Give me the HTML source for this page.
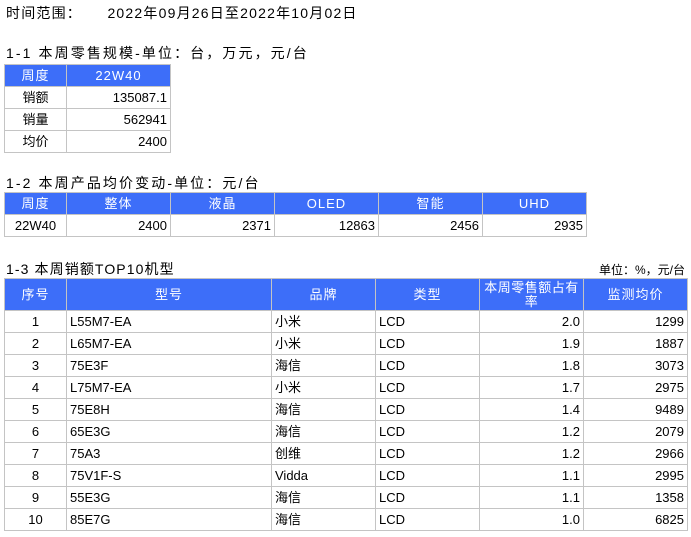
<!DOCTYPE html>
<html><head><meta charset="utf-8"><style>
*{margin:0;padding:0;box-sizing:border-box}
body{width:691px;height:537px;background:#fff;font-family:"Liberation Sans","Noto Sans CJK SC",sans-serif;font-size:13px;color:#000;position:relative;overflow:hidden}
.t{position:absolute;white-space:nowrap}
table{position:absolute;border-collapse:collapse;table-layout:fixed}
td{border:1px solid #c4c4c4;height:22px;padding:0 3px;line-height:14px;white-space:nowrap;overflow:hidden}
tr.h td{background:#3d6ef9;color:#fff;text-align:center;letter-spacing:1px}
.c{text-align:center}.r{text-align:right}.l{text-align:left}
</style></head><body>
<div class="t" style="left:6px;top:3px;font-size:14px;letter-spacing:1.2px">时间范围：&nbsp;&nbsp;&nbsp;&nbsp;&nbsp;2022年09月26日至2022年10月02日</div>
<div class="t" style="left:6px;top:43px;font-size:14px;letter-spacing:2.1px">1-1 本周零售规模-单位：台，万元，元/台</div>
<table style="left:4px;top:64px;width:166px">
<col style="width:62px"><col style="width:104px">
<tr class="h"><td>周度</td><td>22W40</td></tr>
<tr><td class="c">销额</td><td class="r">135087.1</td></tr>
<tr><td class="c">销量</td><td class="r">562941</td></tr>
<tr><td class="c">均价</td><td class="r">2400</td></tr>
</table>
<div class="t" style="left:6px;top:173px;font-size:14px;letter-spacing:2.1px">1-2 本周产品均价变动-单位：元/台</div>
<table style="left:4px;top:192px;width:582px">
<col style="width:62px"><col style="width:104px"><col style="width:104px"><col style="width:104px"><col style="width:104px"><col style="width:104px">
<tr class="h"><td>周度</td><td>整体</td><td>液晶</td><td>OLED</td><td>智能</td><td>UHD</td></tr>
<tr><td class="c">22W40</td><td class="r">2400</td><td class="r">2371</td><td class="r">12863</td><td class="r">2456</td><td class="r">2935</td></tr>
</table>
<div class="t" style="left:6px;top:259px;font-size:14px;letter-spacing:1.1px">1-3 本周销额TOP10机型</div>
<div class="t" style="right:6px;top:261px;font-size:12px">单位：%，元/台</div>
<table style="left:4px;top:278px;width:683px">
<col style="width:62px"><col style="width:205px"><col style="width:104px"><col style="width:104px"><col style="width:104px"><col style="width:104px">
<tr class="h"><td style="height:32px">序号</td><td>型号</td><td>品牌</td><td>类型</td><td style="line-height:14px;white-space:normal;padding:0 1px;letter-spacing:0.5px">本周零售额占有率</td><td>监测均价</td></tr>
<tr><td class="c">1</td><td>L55M7-EA</td><td>小米</td><td>LCD</td><td class="r">2.0</td><td class="r">1299</td></tr>
<tr><td class="c">2</td><td>L65M7-EA</td><td>小米</td><td>LCD</td><td class="r">1.9</td><td class="r">1887</td></tr>
<tr><td class="c">3</td><td>75E3F</td><td>海信</td><td>LCD</td><td class="r">1.8</td><td class="r">3073</td></tr>
<tr><td class="c">4</td><td>L75M7-EA</td><td>小米</td><td>LCD</td><td class="r">1.7</td><td class="r">2975</td></tr>
<tr><td class="c">5</td><td>75E8H</td><td>海信</td><td>LCD</td><td class="r">1.4</td><td class="r">9489</td></tr>
<tr><td class="c">6</td><td>65E3G</td><td>海信</td><td>LCD</td><td class="r">1.2</td><td class="r">2079</td></tr>
<tr><td class="c">7</td><td>75A3</td><td>创维</td><td>LCD</td><td class="r">1.2</td><td class="r">2966</td></tr>
<tr><td class="c">8</td><td>75V1F-S</td><td>Vidda</td><td>LCD</td><td class="r">1.1</td><td class="r">2995</td></tr>
<tr><td class="c">9</td><td>55E3G</td><td>海信</td><td>LCD</td><td class="r">1.1</td><td class="r">1358</td></tr>
<tr><td class="c">10</td><td>85E7G</td><td>海信</td><td>LCD</td><td class="r">1.0</td><td class="r">6825</td></tr>
</table>
</body></html>
